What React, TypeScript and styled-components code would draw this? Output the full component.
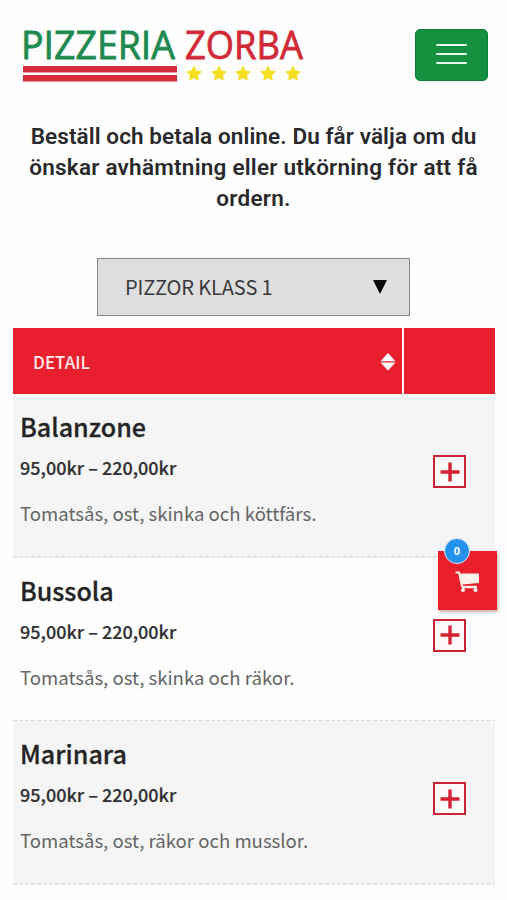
import React from "react";
import styled, { createGlobalStyle } from "styled-components";

const GlobalStyle = createGlobalStyle`
  * { box-sizing: border-box; }
  body { margin: 0; background: #fefefe; }
`;

const sourceSans = `"Noto Sans CJK SC", "Noto Sans", sans-serif`;

const Page = styled.div`
  position: relative;
  width: 507px;
  height: 900px;
  overflow: hidden;
  background: #fefefe;
  font-family: ${sourceSans};
  color: #2a2a2c;
`;

const Header = styled.header`
  display: flex;
  justify-content: space-between;
  align-items: flex-start;
  height: 121px;
  padding: 14px 19px 0 20px;
`;

const Logo = styled.svg`
  display: block;
`;

const MenuButton = styled.button`
  display: flex;
  flex-direction: column;
  align-items: center;
  justify-content: center;
  gap: 7px;
  width: 73px;
  height: 52px;
  margin-top: 15px;
  padding: 0 0 2px;
  border: 1px solid #0d7d3a;
  border-radius: 5px;
  background: #14903f;
`;

const MenuBar = styled.span`
  width: 31px;
  height: 2px;
  border-radius: 1px;
  background: #e4ffe9;
`;

const Intro = styled.h1`
  height: 137px;
  margin: 0;
  font: 600 22.5px/31.2px Roboto, sans-serif;
  text-align: center;
  color: #29292c;
`;

const IntroLine = styled.span<{ $spacing: number }>`
  display: block;
  letter-spacing: ${(p) => p.$spacing}px;
  white-space: nowrap;
`;

const Select = styled.button`
  display: flex;
  align-items: center;
  justify-content: space-between;
  width: 313px;
  height: 58px;
  margin: 0 0 12px 97px;
  padding: 0 22px 0 27px;
  border: 1px solid #858585;
  background: #dedede;
  font: 400 20px/29px ${sourceSans};
  color: #39393b;
`;

const SelectLabel = styled.span`
  padding-bottom: 2px;
  letter-spacing: -0.1px;
  white-space: nowrap;
`;

const Table = styled.section`
  width: 482px;
  margin-left: 13px;
`;

const TableHead = styled.div`
  display: grid;
  grid-template-columns: 389px 91px;
  column-gap: 2px;
  height: 66px;
  background: #fff2f3;
`;

const HeadCell = styled.div`
  display: flex;
  align-items: center;
  justify-content: space-between;
  padding: 1px 6px 0 20px;
  background: #e8202e;
  font-size: 17px;
  font-weight: 500;
  line-height: 26px;
  color: #ffe9ea;
`;

const Row = styled.article<{ $shaded?: boolean }>`
  display: flex;
  justify-content: space-between;
  align-items: flex-start;
  height: 163.5px;
  padding: 13px 29px 0 7px;
  background:
    repeating-linear-gradient(90deg, #dcdcdc 0 4px, transparent 4px 6px) left bottom / 100% 1.5px no-repeat,
    ${(p) => (p.$shaded ? "#f5f5f5" : "#fefefe")};
`;

const Dish = styled.div`
  white-space: nowrap;
`;

const DishName = styled.h2`
  margin: 0;
  font-size: 25.1px;
  font-weight: 500;
  line-height: 39px;
  -webkit-text-stroke: 0.3px currentColor;
  color: #242426;
`;

const Price = styled.p`
  margin: 0 0 11px;
  padding-top: 1px;
  font-size: 18px;
  font-weight: 500;
  line-height: 40px;
  -webkit-text-stroke: 0.2px currentColor;
  color: #303033;
`;

const Description = styled.p`
  margin: 0;
  font-size: 18.6px;
  line-height: 30px;
  color: #656567;
`;

const AddButton = styled.button`
  display: grid;
  place-items: center;
  width: 33px;
  height: 33px;
  margin-top: 48px;
  padding: 0;
  border: 2px solid #c92436;
  background: #fffafa;
`;

const CartButton = styled.button`
  position: absolute;
  left: 438px;
  top: 551px;
  display: grid;
  place-items: center;
  width: 59px;
  height: 59px;
  padding: 3px 0 0;
  border: 0;
  background: #ea1d2b;
  box-shadow: 1px 2px 3px rgba(120, 50, 50, 0.4);
`;

const CartBadge = styled.span`
  position: absolute;
  left: 6px;
  top: -13px;
  width: 26px;
  height: 26px;
  border: 1px solid #d5e7fa;
  border-radius: 50%;
  background: #2491eb;
  color: #f2f9ff;
  font: 700 11px/24px "Open Sans", sans-serif;
  text-align: center;
`;

const dishes = [
  { name: "Balanzone", text: "Tomatsås, ost, skinka och köttfärs." },
  { name: "Bussola", text: "Tomatsås, ost, skinka och räkor." },
  { name: "Marinara", text: "Tomatsås, ost, räkor och musslor." },
];

const starCenters = [174, 199, 223, 248, 273];

function star(cx: number, cy: number) {
  return Array.from({ length: 10 }, (_, i) => {
    const r = i % 2 ? 4.2 : 8.4;
    const a = -Math.PI / 2 + (i * Math.PI) / 5;
    return `${cx + r * Math.cos(a)},${cy + r * Math.sin(a)}`;
  }).join(" ");
}

export default function App() {
  return (
    <Page>
      <GlobalStyle />
      <Header>
        <Logo width="290" height="74" viewBox="0 0 290 74" role="img" aria-label="Pizzeria Zorba">
          <g fontFamily="'Open Sans', sans-serif" fontSize="38" strokeWidth="0.8">
            <text x="1" y="44.5" textLength="154" lengthAdjust="spacingAndGlyphs" fill="#20894f" stroke="#20894f">PIZZERIA</text>
            <text x="165" y="44.5" textLength="118" lengthAdjust="spacingAndGlyphs" fill="#d12a36" stroke="#d12a36">ZORBA</text>
          </g>
          <rect x="3" y="52" width="154" height="6.5" fill="#d42c38" />
          <rect x="3" y="61" width="154" height="6.5" fill="#d42c38" />
          {starCenters.map((cx) => (
            <polygon key={cx} points={star(cx, 60)} fill="#f5df20" />
          ))}
        </Logo>
        <MenuButton aria-label="Meny">
          <MenuBar />
          <MenuBar />
          <MenuBar />
        </MenuButton>
      </Header>
      <Intro>
        <IntroLine $spacing={0.1}>Beställ och betala online. Du får välja om du</IntroLine>
        <IntroLine $spacing={0.24}>önskar avhämtning eller utkörning för att få</IntroLine>
        <IntroLine $spacing={0.3}>ordern.</IntroLine>
      </Intro>
      <Select>
        <SelectLabel>PIZZOR KLASS 1</SelectLabel>
        <svg width="14" height="14" viewBox="0 0 14 14">
          <path d="M0 0H14L7 14Z" fill="#080808" />
        </svg>
      </Select>
      <Table>
        <TableHead>
          <HeadCell>
            <span>DETAIL</span>
            <svg width="16" height="18" viewBox="0 0 16 18">
              <path d="M8 0L15.5 8.3H0.5ZM0.5 9.5H15.5L8 17.5Z" fill="#fff" />
            </svg>
          </HeadCell>
          <HeadCell />
        </TableHead>
        {dishes.map((dish, i) => (
          <Row key={dish.name} $shaded={i % 2 === 0}>
            <Dish>
              <DishName>{dish.name}</DishName>
              <Price>95,00kr – 220,00kr</Price>
              <Description>{dish.text}</Description>
            </Dish>
            <AddButton aria-label="Lägg till">
              <svg width="20" height="20" viewBox="0 0 20 20">
                <path d="M10 0.5V19.5M0.5 10H19.5" stroke="#d32233" strokeWidth="3.4" />
              </svg>
            </AddButton>
          </Row>
        ))}
      </Table>
      <CartButton aria-label="Varukorg">
        <svg width="25" height="22" viewBox="0 0 25 22">
          <path d="M0.5 1.5H4L7 15.5" fill="none" stroke="#fff1ec" strokeWidth="2" />
          <path d="M5 2.5H24V12L7.5 13.5Z" fill="#fff1ec" />
          <path d="M7 16H22" stroke="#fff1ec" strokeWidth="2.4" />
          <circle cx="8" cy="19" r="2.1" fill="#fff1ec" />
          <circle cx="20.5" cy="19" r="2.1" fill="#fff1ec" />
        </svg>
        <CartBadge>0</CartBadge>
      </CartButton>
    </Page>
  );
}
